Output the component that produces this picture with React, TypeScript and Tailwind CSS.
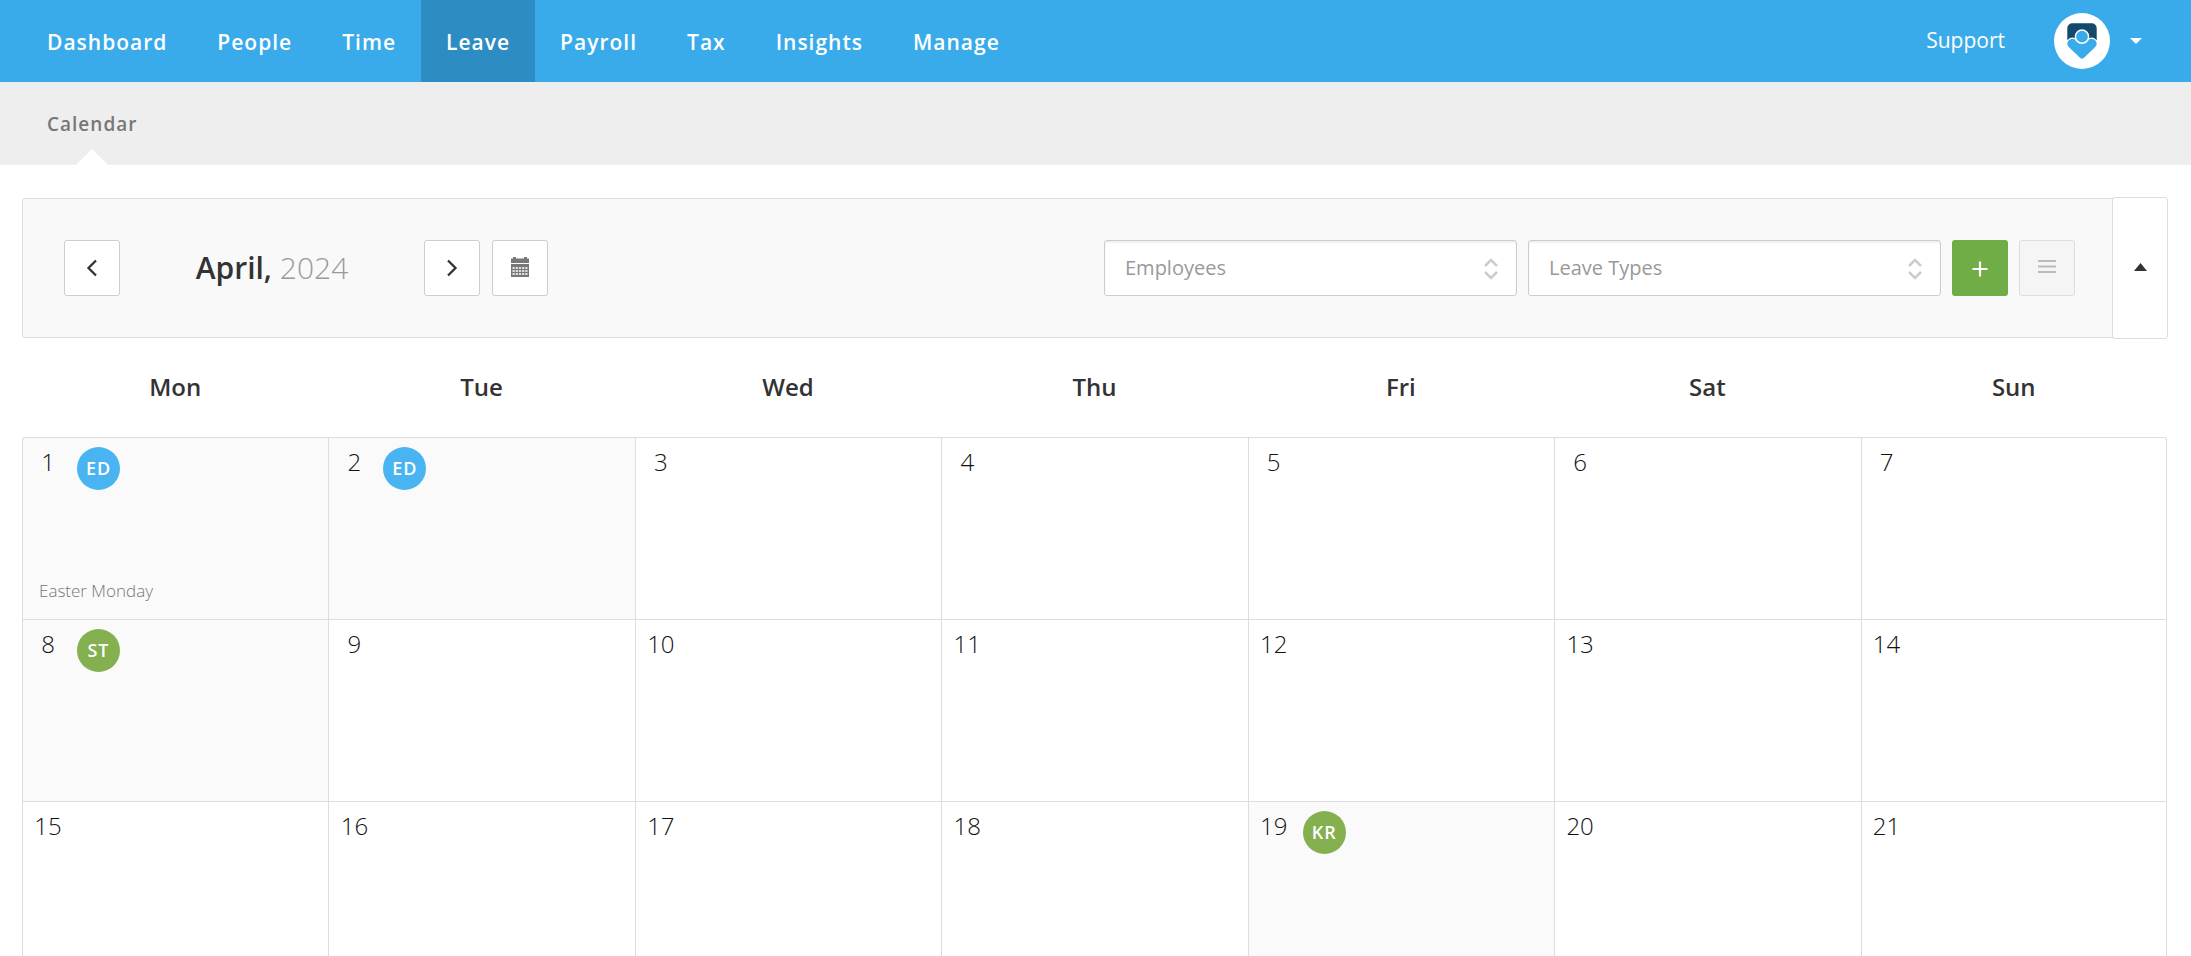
import React from "react";

type Leave = { initials: string; color: "blue" | "green" };
type Day = { date: number; leave?: Leave; holiday?: string };

const navItems = ["Dashboard", "People", "Time", "Leave", "Payroll", "Tax", "Insights", "Manage"];
const weekdays = ["Mon", "Tue", "Wed", "Thu", "Fri", "Sat", "Sun"];

const weeks: Day[][] = [
  [
    { date: 1, leave: { initials: "ED", color: "blue" }, holiday: "Easter Monday" },
    { date: 2, leave: { initials: "ED", color: "blue" } },
    { date: 3 },
    { date: 4 },
    { date: 5 },
    { date: 6 },
    { date: 7 },
  ],
  [
    { date: 8, leave: { initials: "ST", color: "green" } },
    { date: 9 },
    { date: 10 },
    { date: 11 },
    { date: 12 },
    { date: 13 },
    { date: 14 },
  ],
  [
    { date: 15 },
    { date: 16 },
    { date: 17 },
    { date: 18 },
    { date: 19, leave: { initials: "KR", color: "green" } },
    { date: 20 },
    { date: 21 },
  ],
];

function Logo() {
  return (
    <svg width="56" height="56" viewBox="0 0 56 56" aria-hidden="true">
      <circle cx="28" cy="28" r="28" fill="#fff" />
      <path d="M13.300 27V15.300a5 5 0 0 1 5-5h19.400a5 5 0 0 1 5 5V27z" fill="#15486a" />
      <path
        d="M14.800 27.200a4.900 4.900 0 0 1 5.600-1h15.200a4.900 4.900 0 0 1 5.600 1c2 2 2 4.900 0 6.900L30.600 44.300a3.600 3.600 0 0 1-5.200 0L14.800 34.100c-2-2-2-4.900 0-6.900z"
        fill="#3aabea"
        stroke="#fff"
        strokeWidth="2"
        paintOrder="stroke"
      />
      <circle cx="28" cy="23.700" r="6.600" fill="#3aabea" stroke="#fff" strokeWidth="1.500" />
    </svg>
  );
}

function Header() {
  return (
    <header className="flex h-[82px] items-stretch justify-between bg-[#3aabea] pl-[22px] pr-[49px] text-[21px] leading-7 text-white">
      <nav className="flex">
        {navItems.map((item) => (
          <a key={item} href="#" className={`flex items-center px-[25px] pt-px font-semibold tracking-[1px] ${item === "Leave" ? "bg-[#2d8cc2]" : ""}`}>
            {item}
          </a>
        ))}
      </nav>
      <div className="flex items-center">
        <a href="#" className="mr-[49px] pb-[3px]">Support</a>
        <button type="button" aria-label="Account" className="flex items-center gap-5">
          <Logo />
          <svg width="12" height="6" viewBox="0 0 12 6" fill="#fff" aria-hidden="true">
            <path d="M0 0h12L6 6z" />
          </svg>
        </button>
      </div>
    </header>
  );
}

function SubNav() {
  return (
    <nav className="flex h-[83px] bg-[#eee] pl-[47px]">
      <a href="#" className="relative flex items-center text-[19px] font-semibold leading-7 tracking-[1px] text-[#777]">
        Calendar
        <svg className="absolute bottom-0 left-1/2 -translate-x-1/2" width="32" height="16" viewBox="0 0 32 16" fill="#fff" aria-hidden="true">
          <path d="M0 16L16 0l16 16z" />
        </svg>
      </a>
    </nav>
  );
}

const squareButton = "flex size-14 shrink-0 items-center justify-center rounded-[3px] border border-[#ccc] bg-white";

function FilterSelect({ label }: { label: string }) {
  return (
    <div className="relative w-[413px]">
      <select aria-label={label} className="h-14 w-full appearance-none rounded-[3px] border border-[#ccc] bg-white px-5 text-[20px] text-[#999] shadow-[inset_0_2px_2px_rgba(0,0,0,0.06)]">
        <option>{label}</option>
      </select>
      <svg className="pointer-events-none absolute right-[19px] top-[18px]" width="14" height="22" viewBox="0 0 14 22" fill="none" stroke="#ccc" strokeWidth="2.500" aria-hidden="true">
        <path d="M1 8l6-6 6 6M1 14l6 6 6-6" />
      </svg>
    </div>
  );
}

function Toolbar() {
  return (
    <div className="flex h-[140px] rounded-[3px] border border-[#ddd] bg-[#f9f9f9]">
      <div className="flex flex-1 items-center justify-between pl-[41px] pr-[37px]">
        <div className="flex items-center">
          <button type="button" aria-label="Previous month" className={squareButton}>
            <svg width="12" height="18" viewBox="0 0 12 18" fill="none" stroke="#333" strokeWidth="2.300" aria-hidden="true">
              <path d="M10 1.500L2.500 9l7.500 7.500" />
            </svg>
          </button>
          <h1 className="w-[304px] text-center text-[30px] font-semibold leading-10 text-[#333]">
            April, <span className="font-light text-[#999]">2024</span>
          </h1>
          <button type="button" aria-label="Next month" className={squareButton}>
            <svg width="12" height="18" viewBox="0 0 12 18" fill="none" stroke="#333" strokeWidth="2.300" aria-hidden="true">
              <path d="M2 1.500L9.500 9 2 16.500" />
            </svg>
          </button>
          <button type="button" aria-label="Pick a date" className={`ml-3 pb-0.5 ${squareButton}`}>
            <svg width="18" height="20" viewBox="0 0 18 20" fill="#777" aria-hidden="true">
              <path d="M0 1.500h2V0h3v1.500h8V0h3v1.500h2V6H0z" />
              <path d="M0 7h18v13H0z" />
              <path d="M1.500 11h15M1.500 14h15M1.500 17h15" stroke="#fff" strokeWidth="1.600" strokeDasharray="2.300 0.880" />
            </svg>
          </button>
        </div>
        <div className="flex items-center gap-[11px]">
          <FilterSelect label="Employees" />
          <FilterSelect label="Leave Types" />
          <button type="button" aria-label="Add leave" className="flex size-14 items-center justify-center rounded-[3px] bg-[#70ad46] pt-0.5">
            <svg width="16" height="16" viewBox="0 0 16 16" stroke="#fff" strokeWidth="2.200" aria-hidden="true">
              <path d="M8 .5v15M.5 8h15" />
            </svg>
          </button>
          <button type="button" aria-label="List view" className="flex size-14 items-center justify-center rounded-[3px] border border-[#ddd] bg-[#f5f5f5] pb-1">
            <svg width="18" height="13" viewBox="0 0 18 13" stroke="#bbb" strokeWidth="2" aria-hidden="true">
              <path d="M0 1h18M0 6.500h18M0 12h18" />
            </svg>
          </button>
        </div>
      </div>
      <button type="button" aria-label="Collapse" className="-my-[2px] -mr-[2px] flex w-14 items-center justify-center rounded-[3px] border border-[#ddd] bg-white pb-0.5">
        <svg width="13" height="8" viewBox="0 0 13 8" fill="#333" aria-hidden="true">
          <path d="M6.500 0L13 8H0z" />
        </svg>
      </button>
    </div>
  );
}

function DayCell({ day }: { day: Day }) {
  return (
    <td className={`border-l border-t border-[#ddd] p-0 align-top last:border-r ${day.leave ? "bg-[#fafafa]" : "bg-white"} ${day.date === 1 ? "rounded-tl-[3px]" : ""} ${day.date === 7 ? "rounded-tr-[3px]" : ""}`}>
      <div className="flex h-[181px] flex-col justify-between pb-3 pt-[9px]">
        <div className="flex">
          <span className="w-[50px] text-center text-[24px] font-light leading-[30px] text-[#111]">{day.date}</span>
          {day.leave ? (
            <span className={`ml-1 flex size-[43px] items-center justify-center rounded-full pb-0.5 text-[18px] font-semibold leading-6 tracking-[1px] text-white ${day.leave.color === "blue" ? "bg-[#49b4f1]" : "bg-[#85b04f]"}`}>
              {day.leave.initials}
            </span>
          ) : null}
        </div>
        {day.holiday ? <div className="pl-4 text-[17px] font-light leading-8 text-[#777]">{day.holiday}</div> : null}
      </div>
    </td>
  );
}

export default function App() {
  return (
    <div className="h-screen overflow-hidden bg-white font-['Open_Sans',sans-serif]">
      <Header />
      <SubNav />
      <main className="pl-[22px] pr-6 pt-[33px]">
        <Toolbar />
        <table className="w-full table-fixed border-separate border-spacing-0">
          <thead>
            <tr>
              {weekdays.map((name) => (
                <th key={name} scope="col" className="h-[99px] p-0 pb-0.5 text-center text-[24px] font-semibold leading-8 text-[#333]">
                  {name}
                </th>
              ))}
            </tr>
          </thead>
          <tbody>
            {weeks.map((week) => (
              <tr key={week[0].date}>
                {week.map((day) => (
                  <DayCell key={day.date} day={day} />
                ))}
              </tr>
            ))}
          </tbody>
        </table>
      </main>
    </div>
  );
}
